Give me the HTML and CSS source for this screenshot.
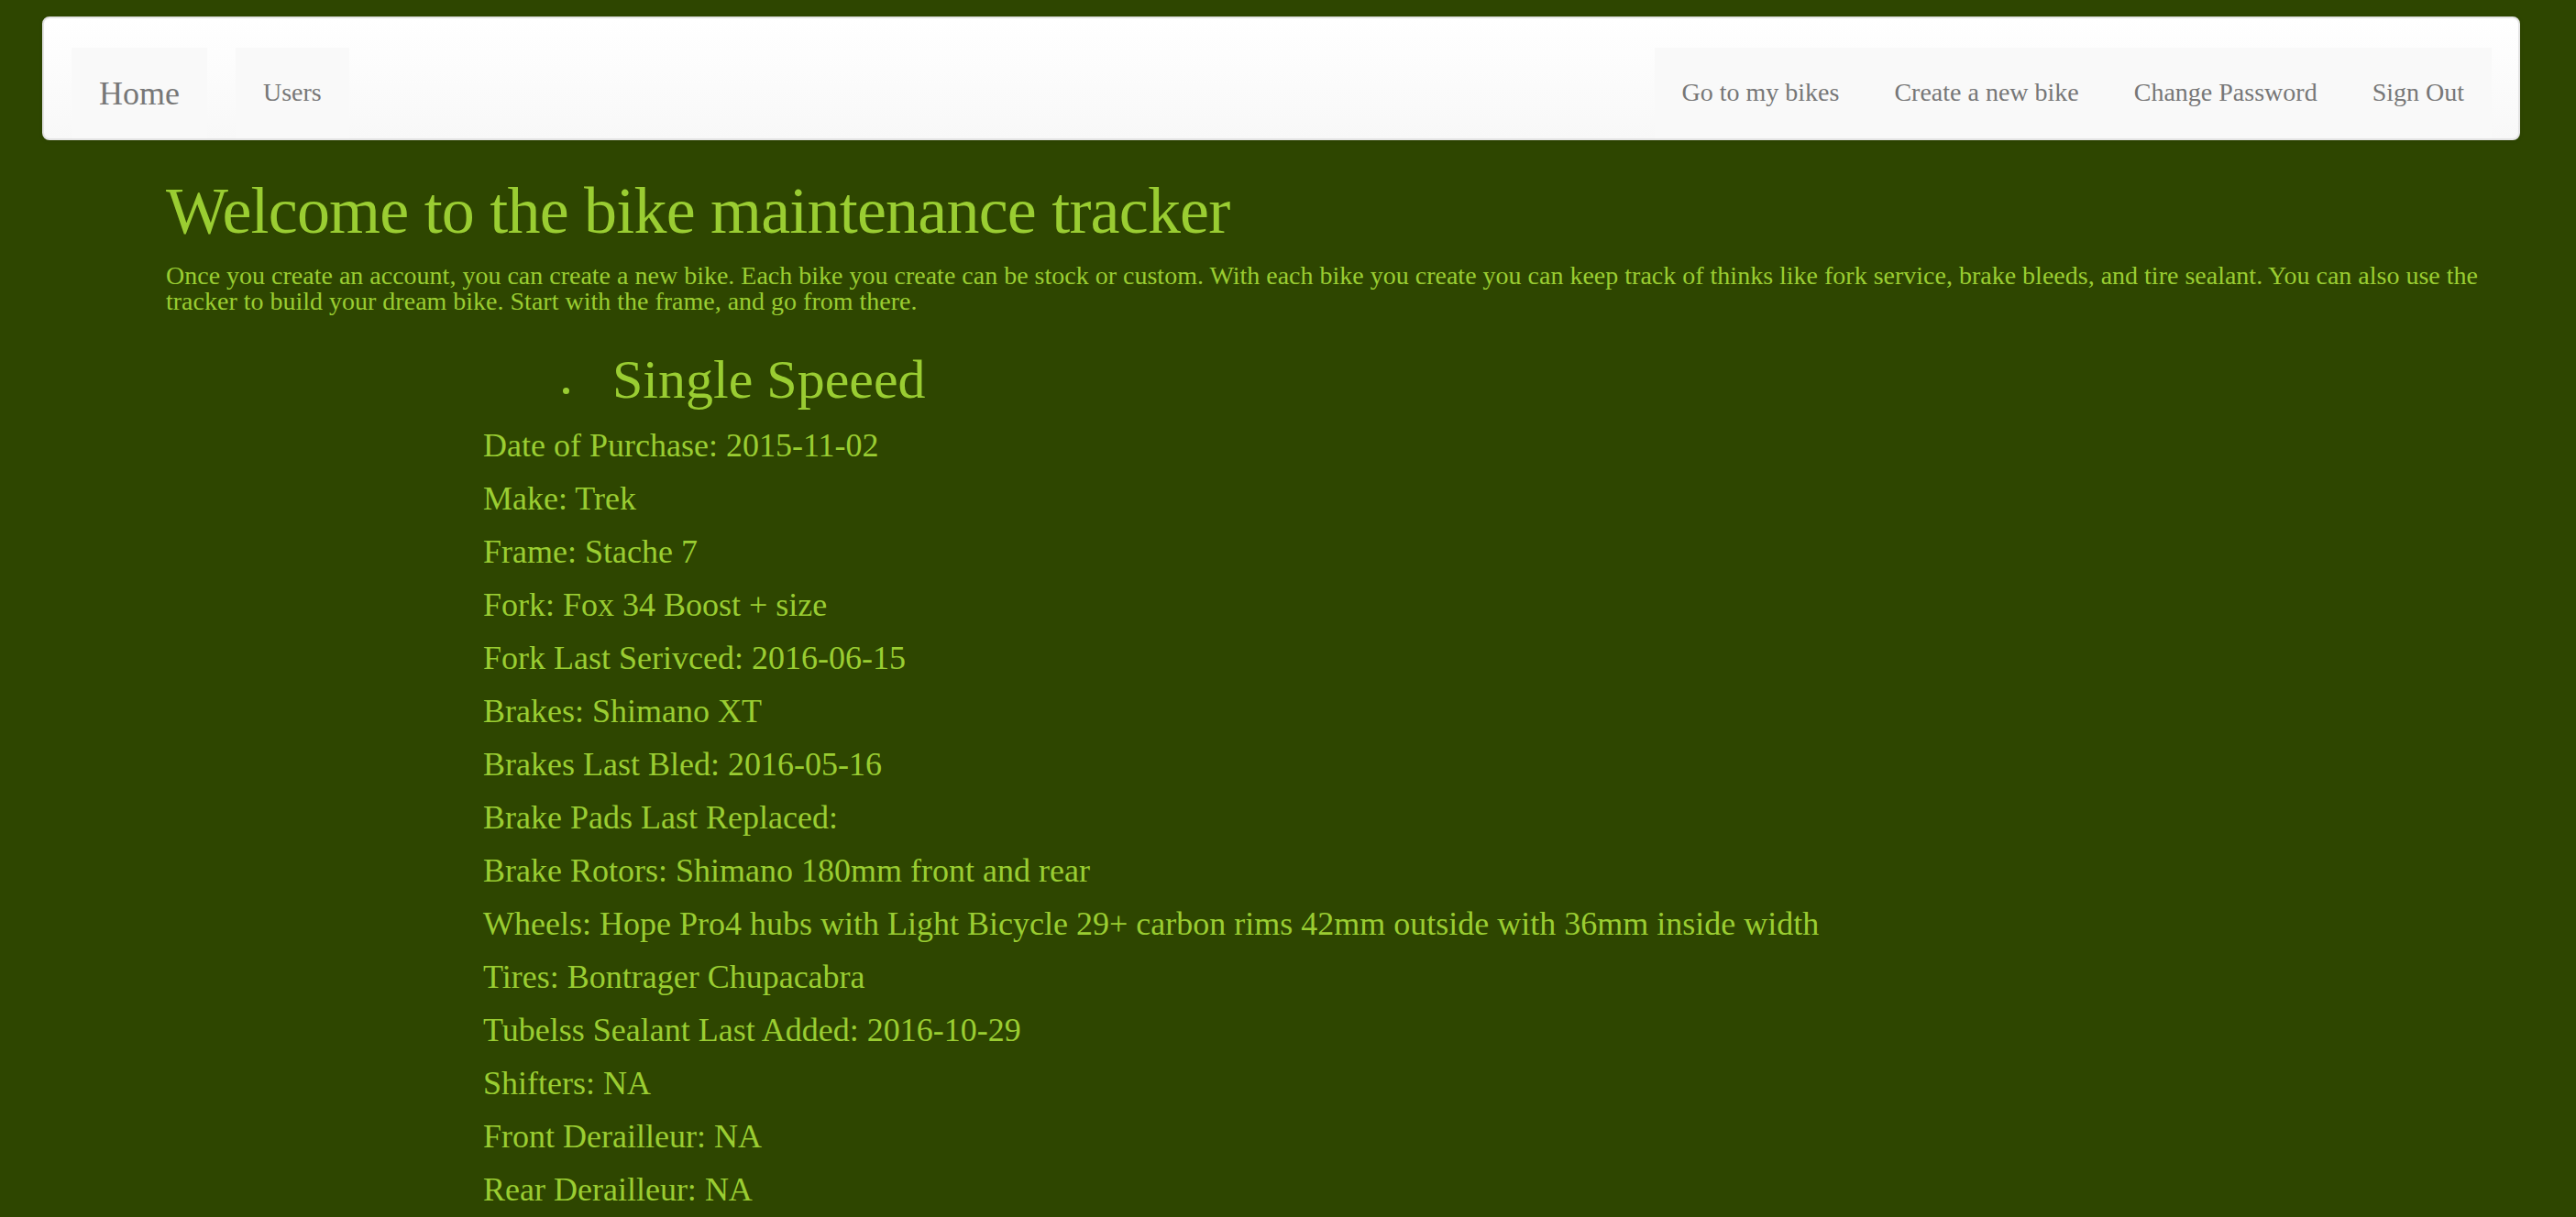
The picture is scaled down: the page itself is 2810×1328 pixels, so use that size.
FILE: index.html
```html
<!DOCTYPE html>
<html lang="en">
<head>
<meta charset="utf-8">
<title>Bike Maintenance Tracker</title>
<link rel="stylesheet" href="styles.css">
</head>
<body>
<nav class="navbar">
  <div class="nav-left">
    <a class="brand" href="#">Home</a>
    <a class="nav-link" href="#">Users</a>
  </div>
  <div class="nav-right">
    <a class="nav-link" href="#">Go to my bikes</a>
    <a class="nav-link" href="#">Create a new bike</a>
    <a class="nav-link" href="#">Change Password</a>
    <a class="nav-link" href="#">Sign Out</a>
  </div>
</nav>
<main class="content">
  <h1 class="title">Welcome to the bike maintenance tracker</h1>
  <p class="intro">Once you create an account, you can create a new bike. Each bike you create can be stock or custom. With each bike you create you can keep track of thinks like fork service, brake bleeds, and tire sealant. You can also use the tracker to build your dream bike. Start with the frame, and go from there.</p>
  <section class="bikes">
    <ul class="bike-list">
      <li class="bike-item"><span class="dot"></span><h2 class="bike-name">Single Speeed</h2></li>
    </ul>
    <div class="details">
      <p class="detail">Date of Purchase: 2015-11-02</p>
      <p class="detail">Make: Trek</p>
      <p class="detail">Frame: Stache 7</p>
      <p class="detail">Fork: Fox 34 Boost + size</p>
      <p class="detail">Fork Last Serivced: 2016-06-15</p>
      <p class="detail">Brakes: Shimano XT</p>
      <p class="detail">Brakes Last Bled: 2016-05-16</p>
      <p class="detail">Brake Pads Last Replaced:</p>
      <p class="detail">Brake Rotors: Shimano 180mm front and rear</p>
      <p class="detail">Wheels: Hope Pro4 hubs with Light Bicycle 29+ carbon rims 42mm outside with 36mm inside width</p>
      <p class="detail">Tires: Bontrager Chupacabra</p>
      <p class="detail">Tubelss Sealant Last Added: 2016-10-29</p>
      <p class="detail">Shifters: NA</p>
      <p class="detail">Front Derailleur: NA</p>
      <p class="detail">Rear Derailleur: NA</p>
    </div>
  </section>
</main>
</body>
</html>
```
FILE: styles.css
```css
html, body {
  margin: 0;
  padding: 0;
}

body {
  background: #2e4600;
  font-family: "Liberation Serif", "Times New Roman", serif;
  color: #9acd32;
  padding-top: 18px;
  overflow: hidden;
}

.navbar {
  margin: 0 61px 0 46px;
  box-sizing: border-box;
  height: 135px;
  border: 2px solid #e4e4e4;
  border-radius: 8px;
  background: linear-gradient(to bottom, #ffffff 0%, #f8f8f8 100%);
  box-shadow: 0 1px 5px rgba(0, 0, 0, 0.08);
  padding: 32px 29px 0 30px;
  display: flex;
  justify-content: space-between;
  align-items: flex-start;
}

.nav-left,
.nav-right {
  display: flex;
  background: #f9f9f9;
}

.nav-left {
  background: transparent;
  gap: 31px;
}

.brand,
.nav-link {
  display: block;
  text-decoration: none;
  color: #777777;
  height: 99px;
  box-sizing: border-box;
  line-height: 40px;
  padding: 0 30px;
  background: #f9f9f9;
}

.brand {
  font-size: 36px;
  padding-top: 30px;
}

.nav-link {
  font-size: 28px;
  padding-top: 29px;
}

.content {
  padding-left: 181px;
  padding-right: 61px;
}

.title {
  margin: 38px 0 0;
  font-size: 72px;
  line-height: 79px;
  font-weight: normal;
  letter-spacing: -0.8px;
}

.intro {
  margin: 17px 0 0;
  font-size: 28px;
  line-height: 28px;
}

.bikes {
  margin-top: 38px;
  padding-left: 346px;
}

.bike-list {
  list-style: none;
  margin: 0;
  padding: 0 0 0 87px;
}

.bike-item {
  display: flex;
  align-items: flex-start;
}

.dot {
  flex: none;
  width: 7px;
  height: 7px;
  border-radius: 50%;
  background: #9acd32;
  margin: 41.5px 47px 0 0;
}

.bike-name {
  margin: 0;
  font-size: 60px;
  line-height: 66px;
  font-weight: normal;
}

.details {
  margin-top: 20px;
  display: flex;
  flex-direction: column;
  gap: 20px;
}

.detail {
  margin: 0;
  font-size: 36px;
  line-height: 38px;
}
```
